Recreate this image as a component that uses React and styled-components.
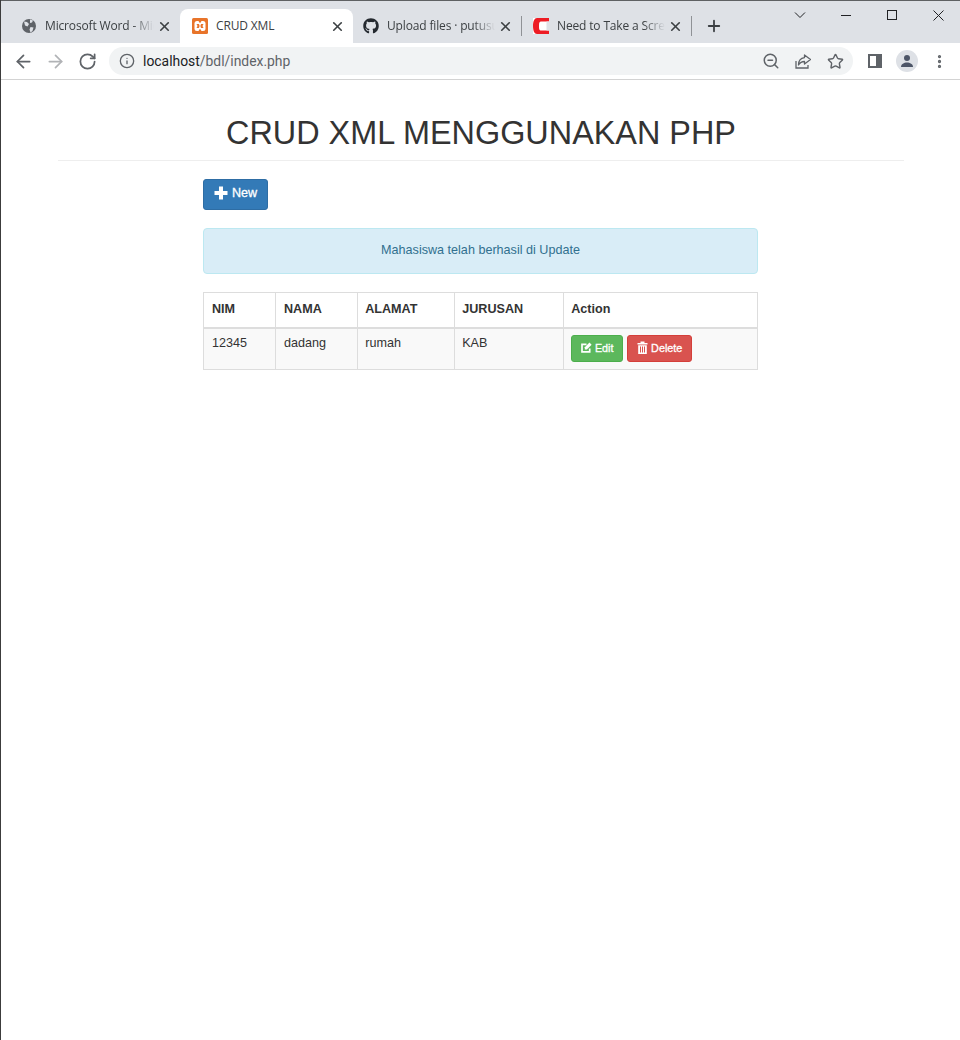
import React from "react";
import styled, { createGlobalStyle } from "styled-components";
import { FaGithub } from "react-icons/fa";
import {
  ArrowLeft,
  ArrowRight,
  RotateCw,
  Info,
  ZoomOut,
  Star,
  MoreVertical,
  X,
  Plus,
} from "lucide-react";

const GlobalStyle = createGlobalStyle`
  html, body {
    margin: 0;
    padding: 0;
    background: #fff;
  }
  * {
    box-sizing: border-box;
  }
`;

const Frame = styled.div`
  width: 960px;
  height: 1040px;
  overflow: hidden;
  border-left: 1px solid #3c3c3c;
  display: flex;
  flex-direction: column;
  font-family: "Liberation Sans", Arial, sans-serif;
  color: #333;
`;

const TabStrip = styled.div`
  height: 43px;
  flex: none;
  background: #dee1e6;
  border-top: 1px solid #5f6163;
  display: flex;
  align-items: flex-end;
  padding-left: 7px;
`;

const Tab = styled.div`
  width: ${(p) => p.$width}px;
  height: 34px;
  flex: none;
  display: flex;
  align-items: center;
  padding: 0 8px 0 ${(p) => p.$pad}px;
  background: ${(p) => (p.$active ? "#fff" : "transparent")};
  border-radius: 8px 8px 0 0;
`;

const TabDivider = styled.span`
  width: 1px;
  height: 20px;
  margin-bottom: 7px;
  flex: none;
  background: #8f9296;
`;

const TabTitle = styled.span`
  flex: 1;
  min-width: 0;
  margin: 0 3px 1px 8px;
  white-space: nowrap;
  overflow: hidden;
  font: 12px "Open Sans", sans-serif;
  letter-spacing: -0.15px;
  color: #3c4043;
  mask-image: ${(p) =>
    p.$fade ? "linear-gradient(to right, #000 80%, transparent 100%)" : "none"};
`;

const Favicon = styled.span`
  width: 16px;
  height: 16px;
  flex: none;
  display: flex;
  align-items: center;
  justify-content: center;
`;

const CloseTab = styled(X)`
  width: 15px;
  height: 15px;
  flex: none;
  color: #3c4043;
  stroke-width: 2.6;
`;

const NewTab = styled(Plus)`
  width: 18px;
  height: 18px;
  margin: 0 0 8px 13px;
  flex: none;
  color: #3c4043;
  stroke-width: 2.4;
`;

const WindowControls = styled.div`
  margin: 0 -1px 0 auto;
  align-self: flex-start;
  height: 28px;
  display: flex;
`;

const WindowButton = styled.span`
  width: 46px;
  height: 28px;
  display: flex;
  align-items: center;
  justify-content: center;
`;

const Toolbar = styled.div`
  height: 37px;
  flex: none;
  background: #fff;
  border-bottom: 1px solid #d3d3d3;
  display: flex;
  align-items: center;
  padding: 0 0 0 6px;
  color: #5f6368;
`;

const NavButton = styled.span`
  width: 32px;
  height: 32px;
  flex: none;
  display: flex;
  align-items: center;
  justify-content: center;
  color: ${(p) => (p.$disabled ? "#b1b3b6" : "#5f6368")};
`;

const Omnibox = styled.div`
  width: 744px;
  height: 28px;
  margin: 0 6px;
  flex: none;
  border-radius: 14px;
  background: #f1f3f4;
  display: flex;
  align-items: center;
  padding: 0 2px 0 10px;
`;

const UrlText = styled.span`
  margin-left: 8px;
  flex: 1;
  font: 13.9px Roboto, sans-serif;
  color: #5f6368;
  b {
    font-weight: 400;
    color: #202124;
  }
`;

const OmniIcon = styled.span`
  width: 32px;
  flex: none;
  display: flex;
  justify-content: center;
  color: #5f6368;
`;

const Avatar = styled.span`
  width: 22px;
  height: 22px;
  border-radius: 50%;
  background: #dee1e6;
  display: flex;
  align-items: center;
  justify-content: center;
`;

const Page = styled.div`
  flex: 1;
  padding: 0 56px 0 57px;
`;

const Header = styled.h1`
  margin: 20px 0 18px;
  height: 61px;
  padding-top: 13px;
  border-bottom: 1px solid #eee;
  font-size: 32.4px;
  line-height: 40px;
  text-align: center;
  font-weight: 400;
  color: #333;
`;

const Content = styled.div`
  width: 555px;
  margin-left: 145px;
`;

const Button = styled.button`
  display: inline-flex;
  align-items: center;
  justify-content: center;
  height: ${(p) => (p.$small ? "27px" : "31px")};
  padding: 0 0 ${(p) => (p.$small ? "1px" : "3px")};
  width: ${(p) => p.$width}px;
  gap: ${(p) => (p.$small ? "3px" : "4px")};
  border: 1px solid ${(p) => p.$border};
  border-radius: 3px;
  background: ${(p) => p.$bg};
  color: #fff;
  font-family: "Liberation Sans", Arial, sans-serif;
  font-size: ${(p) => (p.$small ? "10.8px" : "12.6px")};
  -webkit-text-stroke: 0.3px #fff;
`;

const Alert = styled.div`
  margin: 18px 0;
  height: 46px;
  padding-bottom: 2px;
  border: 1px solid #bce8f1;
  border-radius: 4px;
  background: #d9edf7;
  color: #31708f;
  font-size: 12.6px;
  display: flex;
  align-items: center;
  justify-content: center;
`;

const Table = styled.table`
  width: 555px;
  table-layout: fixed;
  border-collapse: collapse;
  border: 1px solid #ddd;
  font-size: 12.6px;
  color: #333;
`;

const Th = styled.th`
  height: 35px;
  padding: 0 7.2px 2px ${(p) => p.$pad}px;
  border: 1px solid #ddd;
  border-bottom: 2px solid #ddd;
  text-align: left;
  font-weight: 700;
`;

const Td = styled.td`
  height: 42px;
  padding: 6px 7.2px 0 ${(p) => p.$pad}px;
  border: 1px solid #ddd;
  background: #f9f9f9;
  vertical-align: top;
  line-height: 16px;
`;

const Actions = styled.div`
  display: flex;
  gap: 4px;
`;

const columns = [
  ["NIM", 72, "12345", 8],
  ["NAMA", 82, "dadang", 8],
  ["ALAMAT", 97, "rumah", 7.2],
  ["JURUSAN", 109, "KAB", 7.2],
];

const GlobeIcon = () => (
  <svg width="16" height="16" viewBox="0 0 16 16">
    <circle cx="8" cy="8" r="7" fill="#5f6368" />
    <path
      d="M3 3.500l3 .5 2 2-1.500 2.500-2.500-1zM9 1.500l3 1-1 2-2 .5zM9.500 9l3 .5-1 3.500-2 1.500-1-3z"
      fill="#dee1e6"
    />
  </svg>
);

const XamppIcon = () => (
  <svg width="16" height="16" viewBox="0 0 16 16">
    <rect width="16" height="16" rx="1.500" fill="#e8742a" />
    <rect x="2.500" y="3" width="11" height="10" rx="2.500" fill="#fff" />
    <path
      d="M6.500 3h3L8.500 4.800h-1zM6.500 13h3l-1-1.800h-1zM4.500 6h2.500l.6 2-.6 2H4.500l1-2zM11.500 6H9l-.6 2 .6 2h2.500l-1-2z"
      fill="#e8742a"
    />
  </svg>
);

const CapturaIcon = () => (
  <svg width="16" height="16" viewBox="0 0 16 16">
    <rect width="16" height="16" fill="#fff" />
    <path d="M4 0h12v3.500H8C6.500 3.500 6 4.500 6 8s.5 4.500 2 4.500h8V16H4C1.500 16 0 13 0 8s1.500-8 4-8z" fill="#ed1c24" />
    <rect x="13.500" y="3.500" width="2.500" height="9" fill="#dee1e6" />
  </svg>
);

const ShareIcon = () => (
  <svg width="16" height="16" viewBox="0 0 16 16" fill="none" stroke="#5f6368" strokeWidth="1.300">
    <path d="M1 8v7h12v-3" />
    <path d="M9.500 2l6 4.500-6 4.500V8.500C7 8.500 5 9.500 3.500 12c0-4.500 2.500-7 6-7.400z" strokeLinejoin="round" />
  </svg>
);

const SidePanelIcon = () => (
  <svg width="14" height="14" viewBox="0 0 14 14">
    <path d="M0 0h14v14H0z" fill="#5f6368" />
    <path d="M2 2h6v10H2z" fill="#fff" />
  </svg>
);

const PersonIcon = () => (
  <svg width="14" height="14" viewBox="0 0 14 14" fill="#4d5567">
    <circle cx="7" cy="4" r="3" />
    <path d="M1 13c0-3 3-4.500 6-4.500s6 1.500 6 4.500z" />
  </svg>
);

const ChromeChevron = () => (
  <svg width="12" height="12" viewBox="0 0 12 12" fill="none" stroke="#202124">
    <path d="M1 3.500L6 8.500 11 3.500" />
  </svg>
);

const ChromeMinimize = () => (
  <svg width="10" height="10" viewBox="0 0 10 10" fill="none" stroke="#202124" shapeRendering="crispEdges">
    <path d="M0 5.500H10" />
  </svg>
);

const ChromeMaximize = () => (
  <svg width="10" height="10" viewBox="0 0 10 10" fill="none" stroke="#202124" shapeRendering="crispEdges">
    <rect x="0.500" y="0.500" width="9" height="9" />
  </svg>
);

const ChromeClose = () => (
  <svg width="11" height="11" viewBox="0 0 11 11" fill="none" stroke="#202124">
    <path d="M0.500 0.500L10.500 10.500M10.500 0.500L0.500 10.500" />
  </svg>
);

const GlyphPlus = () => (
  <svg width="14" height="14" viewBox="0 0 14 14" fill="#fff">
    <path d="M5 0.500h4v4.500h4.500v4H9v4.500H5V9H0.500V5H5z" />
  </svg>
);

const GlyphEdit = () => (
  <svg width="11" height="11" viewBox="0 0 11 11" fill="none">
    <path d="M8.700 6.500V9.800H1V2.300H5.500" stroke="#fff" strokeWidth="1.700" />
    <path d="M3.800 5.300L8.500 0.600l2.100 2.100-4.700 4.700H3.800z" fill="#fff" />
  </svg>
);

const GlyphTrash = () => (
  <svg width="11" height="13" viewBox="0 0 11 13" fill="#fff">
    <path d="M0.500 2h3V0.500h4V2h3v1.500h-10z" />
    <path d="M1.200 4.300h8.600V13H1.200zM3 5.500v6h1v-6zM5 5.500v6h1v-6zM7 5.500v6h1v-6z" fillRule="evenodd" />
  </svg>
);

function App() {
  return (
    <Frame>
      <GlobalStyle />
      <TabStrip>
        <Tab $width={172} $pad={13}>
          <Favicon><GlobeIcon /></Favicon>
          <TabTitle $fade>Microsoft Word - Microsoft</TabTitle>
          <CloseTab />
        </Tab>
        <Tab $width={173} $pad={12} $active>
          <Favicon><XamppIcon /></Favicon>
          <TabTitle>CRUD XML</TabTitle>
          <CloseTab />
        </Tab>
        <Tab $width={168} $pad={10}>
          <Favicon><FaGithub size={16} color="#24292f" /></Favicon>
          <TabTitle $fade>Upload files · putusuwa</TabTitle>
          <CloseTab />
        </Tab>
        <TabDivider />
        <Tab $width={169} $pad={11}>
          <Favicon><CapturaIcon /></Favicon>
          <TabTitle $fade>Need to Take a Screenshot</TabTitle>
          <CloseTab />
        </Tab>
        <TabDivider />
        <NewTab />
        <WindowControls>
          <WindowButton><ChromeChevron /></WindowButton>
          <WindowButton><ChromeMinimize /></WindowButton>
          <WindowButton><ChromeMaximize /></WindowButton>
          <WindowButton><ChromeClose /></WindowButton>
        </WindowControls>
      </TabStrip>
      <Toolbar>
        <NavButton><ArrowLeft size={21} strokeWidth={2} /></NavButton>
        <NavButton $disabled><ArrowRight size={21} strokeWidth={2} /></NavButton>
        <NavButton><RotateCw size={19} strokeWidth={2.2} /></NavButton>
        <Omnibox>
          <Info size={16} />
          <UrlText><b>localhost</b>/bdl/index.php</UrlText>
          <OmniIcon><ZoomOut size={18} /></OmniIcon>
          <OmniIcon><ShareIcon /></OmniIcon>
          <OmniIcon><Star size={17} /></OmniIcon>
        </Omnibox>
        <NavButton><SidePanelIcon /></NavButton>
        <NavButton><Avatar><PersonIcon /></Avatar></NavButton>
        <NavButton><MoreVertical size={17} strokeWidth={2.6} /></NavButton>
      </Toolbar>
      <Page>
        <Header>CRUD XML MENGGUNAKAN PHP</Header>
        <Content>
          <Button $width={65} $bg="#337ab7" $border="#2e6da4">
            <GlyphPlus /> New
          </Button>
          <Alert>Mahasiswa telah berhasil di Update</Alert>
          <Table>
            <colgroup>
              {columns.map(([name, width]) => (
                <col key={name} style={{ width }} />
              ))}
              <col />
            </colgroup>
            <thead>
              <tr>
                {columns.map(([name, , , pad]) => (
                  <Th key={name} $pad={pad}>{name}</Th>
                ))}
                <Th $pad={7.2}>Action</Th>
              </tr>
            </thead>
            <tbody>
              <tr>
                {columns.map(([name, , value, pad]) => (
                  <Td key={name} $pad={pad}>{value}</Td>
                ))}
                <Td $pad={7.2}>
                  <Actions>
                    <Button $small $width={52} $bg="#5cb85c" $border="#4cae4c">
                      <GlyphEdit /> Edit
                    </Button>
                    <Button $small $width={65} $bg="#d9534f" $border="#d43f3a">
                      <GlyphTrash /> Delete
                    </Button>
                  </Actions>
                </Td>
              </tr>
            </tbody>
          </Table>
        </Content>
      </Page>
    </Frame>
  );
}

export default App;
